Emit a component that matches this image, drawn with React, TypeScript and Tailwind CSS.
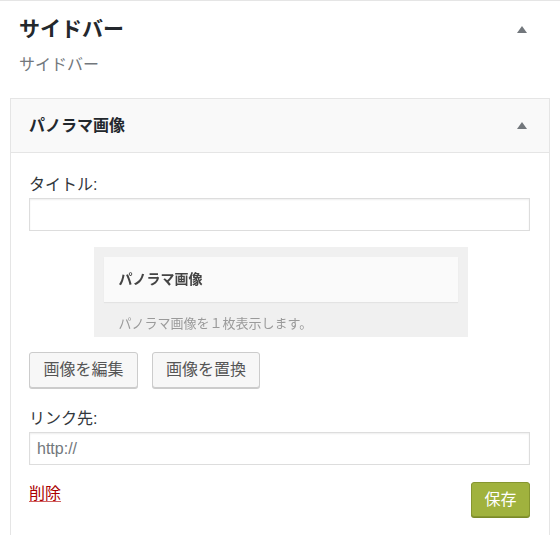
import React from 'react';

const font = "font-['Liberation_Sans','Noto_Sans_CJK_JP',sans-serif]";

function Caret() {
  return (
    <svg width="10" height="7" viewBox="0 0 10 7" className="shrink-0">
      <polygon points="5,0 10,7 0,7" fill="#72777c" />
    </svg>
  );
}

function WidgetPreview() {
  // screenshot of the widget, shown as a small thumbnail
  return (
    <div className="mx-auto mt-[16px] h-[90px] w-[374px] translate-x-[1px] bg-[#f0f0f0] px-[10px] pt-[10px]">
      <div className="flex h-[45px] items-center bg-[#fafafa] pl-[15px] shadow-[0_1px_1px_rgba(0,0,0,0.05)]">
        <span className="text-[14px] font-bold text-[#444] blur-[0.3px]">パノラマ画像</span>
      </div>
      <div className="mt-[12px] pl-[15px] text-[13px] leading-[20px] text-[#9a9a9a] blur-[0.3px]">
        パノラマ画像を１枚表示します。
      </div>
    </div>
  );
}

export default function App() {
  return (
    <div className={`${font} h-[535px] w-[560px] overflow-hidden border-t border-[#e5e5e5] bg-white`}>
      {/* section header */}
      <div className="flex items-center justify-between pl-[19px] pr-[33px] pt-[13px]">
        <h3 className="text-[21px] font-bold leading-[30px] text-[#23282d]">サイドバー</h3>
        <Caret />
      </div>
      <p className="pl-[19px] pt-[9px] text-[16px] leading-[24px] text-[#72777c]">サイドバー</p>

      {/* widget */}
      <div className="mx-[10px] mt-[21px] h-[500px] border border-b-0 border-[#e5e5e5]">
        <div className="flex h-[54px] items-center justify-between border-b border-[#e5e5e5] bg-[#f9f9f9] pl-[18px] pr-[22px]">
          <span className="text-[16px] font-bold text-[#23282d]">パノラマ画像</span>
          <Caret />
        </div>

        <div className="pl-[18px] pr-[19px] pt-[20px]">
          <label className="block text-[16px] leading-[24px] text-[#32373c]">タイトル:</label>
          <input
            type="text"
            className="mt-[1px] block h-[33px] w-full border border-[#ddd] bg-white px-[8px] text-[16px] shadow-[inset_0_1px_2px_rgba(0,0,0,0.07)] outline-none"
          />

          <WidgetPreview />

          <div className="mt-[15px] flex gap-[14px]">
            <button className="h-[36px] w-[109px] rounded-[3px] border border-[#ccc] bg-[#f7f7f7] text-[16px] text-[#555] shadow-[0_1px_0_#ccc]">
              画像を編集
            </button>
            <button className="h-[36px] w-[108px] rounded-[3px] border border-[#ccc] bg-[#f7f7f7] text-[16px] text-[#555] shadow-[0_1px_0_#ccc]">
              画像を置換
            </button>
          </div>

          <label className="mt-[19px] block text-[16px] leading-[24px] text-[#32373c]">リンク先:</label>
          <input
            type="text"
            placeholder="http://"
            className="mt-[1px] block h-[33px] w-full border border-[#ddd] bg-white px-[7px] text-[16px] shadow-[inset_0_1px_2px_rgba(0,0,0,0.07)] outline-none placeholder:text-[#72777c]"
          />

          <div className="mt-[17px] flex items-start justify-between">
            <a href="#" className="text-[16px] leading-[24px] text-[#a00] underline decoration-[#d06060] underline-offset-[2px]">
              削除
            </a>
            <button className="h-[35px] w-[59px] rounded-[3px] border border-[#869630] bg-[#a0b23e] text-[16px] text-white shadow-[0_1px_0_#7a8a28]">
              保存
            </button>
          </div>
        </div>
      </div>
    </div>
  );
}
